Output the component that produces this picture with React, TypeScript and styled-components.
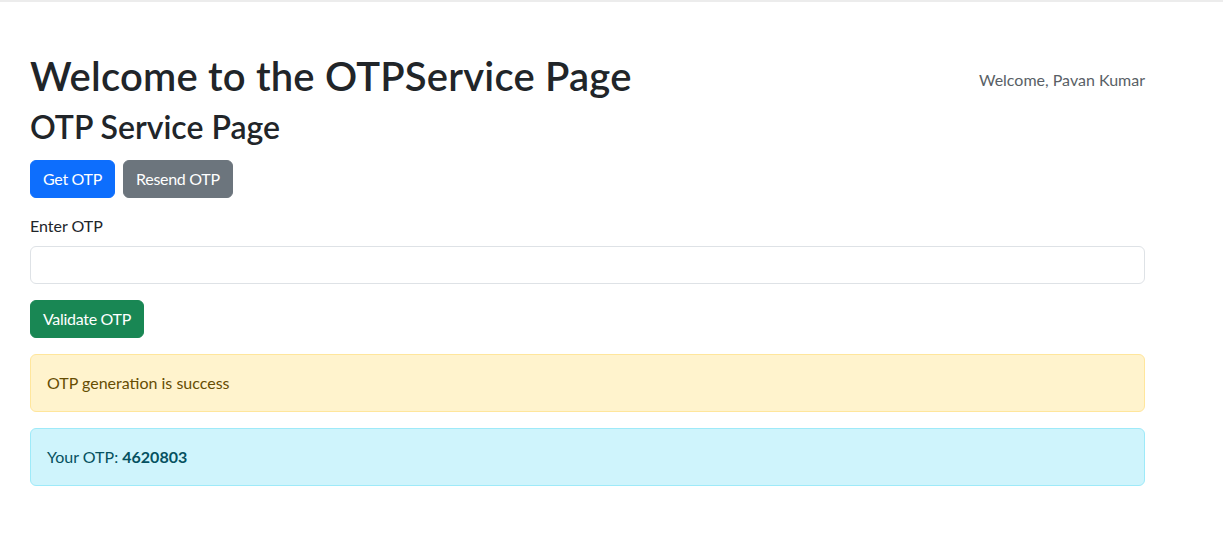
import React from "react";
import styled, { createGlobalStyle } from "styled-components";

const Global = createGlobalStyle`
  html, body { margin: 0; padding: 0; background: #fff; }
  body {
    font-family: Lato, "Noto Sans", sans-serif;
    font-size: 16px;
    line-height: 1.5;
    color: #212529;
  }
  * { box-sizing: border-box; }
`;

const TopRule = styled.div`
  height: 2px;
  background: #ececec;
`;

const Container = styled.main`
  width: 1145px;
  padding: 50px 0 0 30px;
`;

const Header = styled.header`
  display: flex;
  justify-content: space-between;
  align-items: center;
`;

const Title = styled.h1`
  margin: 0 0 8px;
  font-size: 40px;
  font-weight: 600;
  line-height: 1.2;
  letter-spacing: 0.2px;
`;

const Welcome = styled.span`
  color: #595f66;
  font-size: 16px;
`;

const SubTitle = styled.h2`
  margin: 0 0 14px;
  font-size: 32px;
  font-weight: 600;
  line-height: 1.2;
`;

const ButtonRow = styled.div`
  display: flex;
  gap: 8px;
  margin-bottom: 16px;
`;

const variants = {
  primary: "#0d6efd",
  secondary: "#6c757d",
  success: "#198754",
} as const;

const Button = styled.button<{ $variant: keyof typeof variants }>`
  font-family: inherit;
  font-size: 16px;
  line-height: 1.5;
  letter-spacing: -0.3px;
  padding: 6px 12px;
  border: 1px solid ${(p) => variants[p.$variant]};
  background: ${(p) => variants[p.$variant]};
  color: #fff;
  border-radius: 6px;
  cursor: pointer;
`;

const Field = styled.div`
  margin-bottom: 16px;
`;

const Label = styled.label`
  display: block;
  margin-bottom: 8px;
`;

const Input = styled.input`
  display: block;
  width: 100%;
  height: 38px;
  padding: 6px 12px;
  font-family: inherit;
  font-size: 16px;
  border: 1px solid #dee2e6;
  border-radius: 6px;
  outline: none;
`;

const ValidateWrap = styled.div`
  margin-bottom: 16px;
`;

const alerts = {
  warning: { bg: "#fff3cd", border: "#ffe69c", color: "#664d03" },
  info: { bg: "#cff4fc", border: "#9eeaf9", color: "#055160" },
} as const;

const Alert = styled.div<{ $kind: keyof typeof alerts }>`
  padding: 16px;
  margin-bottom: 16px;
  border: 1px solid ${(p) => alerts[p.$kind].border};
  background: ${(p) => alerts[p.$kind].bg};
  color: ${(p) => alerts[p.$kind].color};
  border-radius: 6px;
`;

export default function App() {
  return (
    <>
      <Global />
      <TopRule />
      <Container>
        <Header>
          <Title>Welcome to the OTPService Page</Title>
          <Welcome>Welcome, Pavan Kumar</Welcome>
        </Header>
        <SubTitle>OTP Service Page</SubTitle>
        <ButtonRow>
          <Button $variant="primary">Get OTP</Button>
          <Button $variant="secondary">Resend OTP</Button>
        </ButtonRow>
        <Field>
          <Label htmlFor="otp">Enter OTP</Label>
          <Input id="otp" type="text" />
        </Field>
        <ValidateWrap>
          <Button $variant="success">Validate OTP</Button>
        </ValidateWrap>
        <Alert $kind="warning">OTP generation is success</Alert>
        <Alert $kind="info">
          Your OTP: <strong>4620803</strong>
        </Alert>
      </Container>
    </>
  );
}
